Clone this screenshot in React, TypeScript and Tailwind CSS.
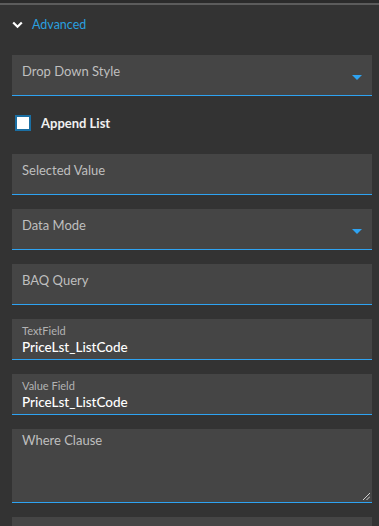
import { ReactNode } from "react";

const font = { fontFamily: "Lato, 'Noto Sans', sans-serif" };

function Caret() {
  return (
    <svg width="10" height="5" viewBox="0 0 10 5" className="absolute right-[10px] top-[20px]">
      <path d="M0 0 L10 0 L5 5 Z" fill="#2ea3f2" />
    </svg>
  );
}

function Field({ label, dropdown }: { label: string; dropdown?: boolean }) {
  return (
    <div className="relative h-[41px] bg-[#454545] border-b border-[#2ea3f2] px-[10px] pt-[8px]">
      <div className="text-[13px] leading-[17px] text-[#bfbfbf]">{label}</div>
      {dropdown && <Caret />}
    </div>
  );
}

function FilledField({ label, value }: { label: string; value: string }) {
  return (
    <div className="h-[41px] bg-[#454545] border-b border-[#2ea3f2] px-[10px] pt-[5px]">
      <div className="text-[11px] leading-[14px] text-[#b3b3b3]">{label}</div>
      <div className="text-[13.5px] leading-[18px] font-medium text-white">{value}</div>
    </div>
  );
}

function Stack({ children }: { children: ReactNode }) {
  return <div className="flex flex-col gap-[14px]">{children}</div>;
}

export default function App() {
  return (
    <div className="w-[379px] h-[526px] bg-[#333333] overflow-hidden" style={font}>
      <div className="h-[3px] bg-[#2b2b2b]" />
      <div className="h-[2px] bg-[#5c5c5c]" />
      <div className="h-[50px] flex items-start pt-[12px] pl-[12px] gap-[9px]">
        <svg width="11" height="8" viewBox="0 0 11 8" className="mt-[4px]">
          <path d="M1.2 1.5 L5.5 5.8 L9.8 1.5" stroke="#ffffff" strokeWidth="2.2" fill="none" />
        </svg>
        <span className="text-[12.5px] leading-[16px] text-[#2a9fdf]">Advanced</span>
      </div>
      <div className="pl-[12px] pr-[7px]">
        <Field label="Drop Down Style" dropdown />
        <div className="flex items-center gap-[10px] pt-[19px] pb-[23px] pl-[3px]">
          <div className="w-[16px] h-[16px] bg-white border-2 border-[#1b6fa3]" />
          <span className="text-[13px] font-bold text-[#f0f0f0] leading-[16px]">Append List</span>
        </div>
        <Stack>
          <Field label="Selected Value" />
          <Field label="Data Mode" dropdown />
          <Field label="BAQ Query" />
          <FilledField label="TextField" value="PriceLst_ListCode" />
          <FilledField label="Value Field" value="PriceLst_ListCode" />
          <div className="relative h-[74px] bg-[#454545] border-b border-[#2ea3f2] px-[10px] pt-[3px]">
            <div className="text-[13px] leading-[17px] text-[#bfbfbf]">Where Clause</div>
            <svg width="7" height="7" viewBox="0 0 7 7" className="absolute right-[2px] bottom-[2px]">
              <path d="M7 0 L0 7 M7 3.5 L3.5 7" stroke="#cfcfcf" strokeWidth="1" />
            </svg>
          </div>
          <div className="h-[41px] bg-[#454545]" />
        </Stack>
      </div>
    </div>
  );
}
